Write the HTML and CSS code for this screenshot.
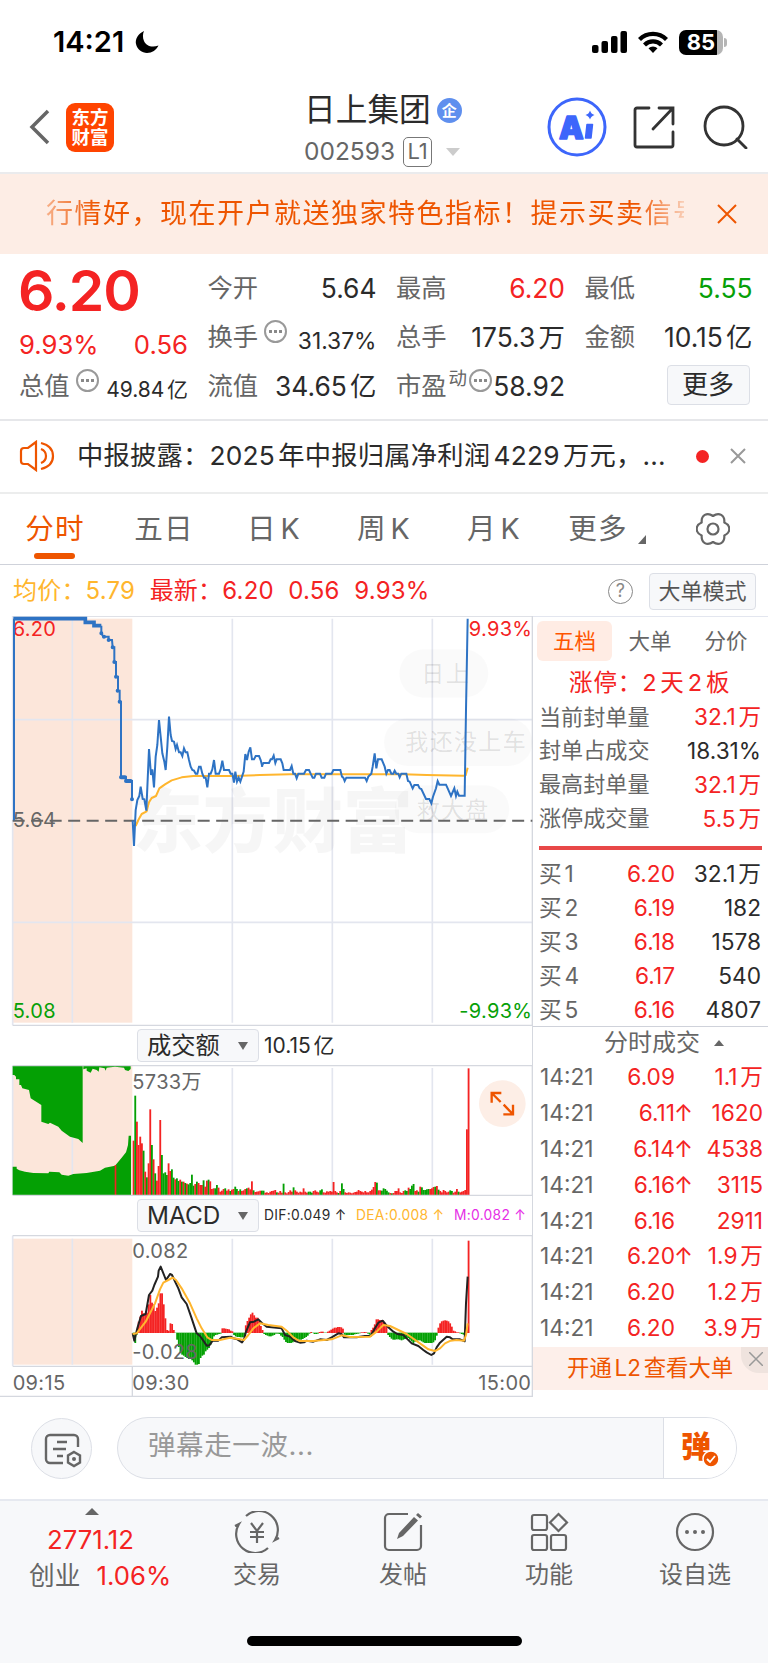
FILE: index.html
```html
<!DOCTYPE html>
<html lang="zh-CN">
<head>
  <meta charset="UTF-8" />
  <meta name="viewport" content="width=device-width, initial-scale=1" />
  <title>日上集团 002593</title>
  <link rel="stylesheet" href="styles.css">
</head>
<body>
  <div class="status">
    <span class="clock">14:21</span>
    <svg class="moon" width="24" height="24" viewBox="0 0 24 24"><path d="M9 1C3 4 0 9 1 14c1.200 5.500 6 9 11 9 5 0 9.500-3 11.500-7.500C17 18 11 16 9 11 7.500 7.500 7.700 4 9 1z"/></svg>
    <svg class="signal" width="35" height="22" viewBox="0 0 35 22"><rect x="0" y="14" width="6.500" height="8" rx="2"/><rect x="9.500" y="10" width="6.500" height="12" rx="2"/><rect x="19" y="5" width="6.500" height="17" rx="2"/><rect x="28.500" y="0" width="6.500" height="22" rx="2"/></svg>
    <svg class="wifi" width="30" height="22" viewBox="0 0 30 22" fill="none" stroke="#000" stroke-width="4.200"><path d="M1.500 8.500a19 19 0 0 1 27 0"/><path d="M6.500 14a12 12 0 0 1 17 0"/><path d="M10.500 17.300a6.500 6.500 0 0 1 9 0L15 22z" fill="#000" stroke="none"/></svg>
    <span class="battery"><b>85</b></span>
  </div>

  <header class="nav">
    <svg class="back" width="22" height="36" viewBox="0 0 22 36"><path d="M19 2L3 18l16 16"/></svg>
    <div class="logo">东方<br>财富</div>
    <div class="title">
      <div class="name">日上集团<span class="ent">企</span></div>
      <div class="code">002593<span class="l1">L1</span><i class="tri-down"></i></div>
    </div>
    <svg class="ai" width="60" height="60" viewBox="0 0 60 60"><circle cx="30" cy="30" r="28"/><text x="12" y="41.500">A</text><path class="stem" d="M40 27.500h5.500l-1.500 13.500h-5.500z"/><path d="M43 13.500q1 3.500 4.500 4.500-3.500 1-4.500 4.500-1-3.500-4.500-4.500 3.500-1 4.500-4.500z"/></svg>
    <svg class="share" width="44" height="44" viewBox="0 0 44 44"><path d="M17 3H5a2 2 0 0 0-2 2v35a2 2 0 0 0 2 2h34a2 2 0 0 0 2-2V27M27 3h14v16M41 3L21 24"/></svg>
    <svg class="search" width="46" height="44" viewBox="0 0 46 44"><circle cx="21" cy="21" r="19"/><path d="M34 34l9 9"/></svg>
  </header>

  <div class="promo">
    <div class="marquee">行情好，现在开户就送独家特色指标！提示买卖信号</div>
    <svg width="20" height="20" viewBox="0 0 20 20"><path d="M1 1l18 18M19 1L1 19"/></svg>
  </div>

  <section class="quote">
    <div class="col">
      <div class="big">6.20</div>
      <div class="chg red"><span>9.93%</span><span>0.56</span></div>
      <div class="kv"><label>总值</label><i class="dots"></i><b class="sm">49.84亿</b></div>
    </div>
    <div class="col">
      <div class="kv"><label>今开</label><b>5.64</b></div>
      <div class="kv"><label>换手</label><i class="dots"></i><b class="sm pct">31.37%</b></div>
      <div class="kv"><label>流值</label><b>34.65亿</b></div>
    </div>
    <div class="col">
      <div class="kv"><label>最高</label><b class="red">6.20</b></div>
      <div class="kv"><label>总手</label><b>175.3万</b></div>
      <div class="kv"><label>市盈</label><sup>动</sup><i class="dots pe"></i><b>58.92</b></div>
    </div>
    <div class="col">
      <div class="kv"><label>最低</label><b class="green">5.55</b></div>
      <div class="kv"><label>金额</label><b>10.15亿</b></div>
      <div class="kv"><button class="more">更多</button></div>
    </div>
  </section>

  <div class="news">
    <svg class="horn" width="36" height="32" viewBox="0 0 36 32"><path d="M17 2L9 8H5a3 3 0 0 0-3 3v10a3 3 0 0 0 3 3h4l8 6zM22 9q5 2 5 7t-5 7M22 3q12 3 12 13T22 29"/></svg>
    <span class="headline">中报披露：2025年中报归属净利润4229万元，...</span>
    <i class="dot"></i>
    <svg class="x" width="16" height="16" viewBox="0 0 16 16"><path d="M1 1l14 14M15 1L1 15"/></svg>
  </div>

  <nav class="tabs">
    <span class="on">分时</span><span>五日</span><span>日K</span><span>周K</span><span>月K</span><span class="mr">更多<i></i></span>
    <svg width="34" height="34" viewBox="0 0 34 34"><path d="M28.300 10.500C35 13.500 35 20.500 28.300 23.500 29 30.800 23 34.300 17 30 11 34.300 5 30.800 5.700 23.500-1 20.500-1 13.500 5.700 10.500 5 3.200 11-.3 17 4 23-.3 29 3.200 28.300 10.500z"/><circle cx="17" cy="17" r="5.500"/></svg>
  </nav>

  <div class="stats">
    <span class="avg">均价：5.79</span>
    <span class="last">最新：6.20</span>
    <span>0.56</span>
    <span>9.93%</span>
    <i class="help">?</i>
    <button>大单模式</button>
  </div>

  <main class="board">
    <div class="charts">
      <!-- chart coordinates are @3x -->
      <svg class="price" width="533" height="410" viewBox="0 48 1599 1230">
        <rect class="pre" x="38" y="56" width="359" height="1212"/>
        <path class="grid" d="M38 48V1276M217 56V1268M697 56V1268M997 56V1268M1297 56V1268M38 359H1597M38 967H1597"/>
        <path class="edge" d="M38 48.500H1597V1278M38 1276H1597"/>
        <text class="mark" x="398" y="742">东方财富</text>
        <g class="bubble">
          <rect x="1198" y="148" width="267" height="145" rx="72"/><text x="1264" y="247">日上</text>
          <rect x="1152" y="355" width="445" height="143" rx="71"/><text x="1216" y="450">我还没上车</text>
          <rect x="1184" y="556" width="344" height="144" rx="72"/><text x="1250" y="655">救大盘</text>
        </g>
        <path class="mid" d="M38 662H1597"/>
        <g class="lbl">
          <text class="r" x="38" y="108">6.20</text>
          <text class="r" x="1597" y="108" text-anchor="end">9.93%</text>
          <text x="38" y="682">5.64</text>
          <text class="g" x="38" y="1253">5.08</text>
          <text class="g" x="1597" y="1253" text-anchor="end">-9.93%</text>
        </g>
        <path class="avgline" d="M407 678L415 660 425 642 440 634 447 607 455 594 468 588 478 565 495 553 515 541 545 532 580 528 700 528 780 525 870 523 1000 523 1210 523 1280 525 1390 527 1397 526 1403 503"/>
        <path class="line thick" d="M40 56H256V67H282V77H304"/>
        <path class="line" d="M42 661V56M304 77V100L310 110H326V120H336L338 142H343V186H348V230H354V272H359V305H363V532H378V543H396V598"/>
        <path class="pts" d="M304 100h0M312 110h0M326 120h0M338 142h0M343 186h0M348 230h0M353 272h0M359 305h0M363 532h12M378 543h14M396 598h0"/>
        <path class="line" d="M398 661L402 738 407 630 412 600 418 588 422 560 428 597 433 598 439 632 447 447 453 525 457 508 462 562 467 470 472 435 477 360 482 410 487 460 493 485 497 510 502 440 507 350 512 405 516 423 522 425 527 447 531 435 537 457 542 457 547 468 552 445 557 457 562 457 567 480 572 500 577 510 582 512 587 521 592 521 597 500 602 500 607 521 612 533 617 533 622 562 627 521 632 521 637 508 642 480 647 521 657 521 662 508 667 482 672 510 687 510 692 521 697 521 702 548 706 515 711 545 716 533 721 545 726 530 731 515 736 462 741 480 746 455 751 442 756 478 762 478 767 468 777 468 782 480 787 500"/>
        <path class="line" transform="translate(780)" d="M5 500L10 489 27 489 32 478 36 478 41 467 46 489 50 478 62 478 67 490 71 510 90 510 95 498 100 521 105 521 110 535 115 521 132 521 138 510 147 510 152 521 158 533 163 533 168 521 180 521 185 533 193 533 198 521 215 521 220 510 241 510 246 530 250 533 254 543 259 533 315 533 320 543 325 530 334 521 338 500 344 460 349 505 354 478 365 478 374 500 379 521 384 510 389 510 394 521 400 521 404 512 409 521 415 521 419 532 424 521 439 521 444 543 449 545 458 565 463 555 474 555 479 565 484 567 498 597 508 597 514 610 519 590 528 565 533 543 538 554 558 554 563 565 573 588 583 565 588 588 592 575 597 587 614 587 618 330 623 56"/>
      </svg>

      <div class="pick">
        <button>成交额<i></i></button><span class="amt">10.15亿</span>
      </div>

      <svg class="vol" width="533" height="131" viewBox="0 135 1599 393">
        <rect class="pre" x="38" y="138" width="359" height="388"/>
        <path class="grid" d="M38 137V526M217 144V526M697 144V526M997 144V526M1297 144V526"/>
        <path class="up-fill" d="M38 138V165H43L48 170V178H58V195H63L67 205 87 210 92 235 105 243 124 255V305L145 312 150 308 175 320 185 332 210 350 235 357 248 369V138z"/>
        <path class="up-fill" d="M250 138V148L260 145V152L272 158 278 146 290 150 296 155 298 142 314 145 317 152 320 143 345 140 372 143 375 150 385 153 392 147V138z"/>
        <path class="up-fill" d="M38 525V440H50V446L58 451 75 455 100 459 145 460 148 455 178 457 185 464 205 467 220 462 260 459 300 452 315 443 345 437 355 425 365 413 378 397 380 390 384 375 386 347H393V525z"/>
        <rect class="down-fill" x="344" y="435" width="5" height="90"/>
        <g id="vol"></g>
        <path class="edge" d="M38 137H1597M38 526.500H1597M1597 135V528"/>
        <text class="lbl" x="397" y="206">5733万</text>
        <circle cx="1507" cy="251" r="70" class="zoomer"/>
        <path class="arrows" d="M1502 246L1475 219M1475 248V219H1504M1511 254L1539 283M1539 254V283H1510"/>
      </svg>

      <div class="pick p2">
        <button>MACD<i></i></button>
        <span class="dif">DIF:0.049 ↑</span><span class="dea">DEA:0.008 ↑</span><span class="m">M:0.082 ↑</span>
      </div>

      <svg class="macd" width="533" height="162" viewBox="0 645 1599 486">
        <rect class="pre" x="38" y="656" width="359" height="378"/>
        <path class="grid" d="M38 647V1038M217 656V1034M697 656V1034M997 656V1034M1297 656V1034"/>
        <path class="edge" d="M38 647H1597M38 1039H1597M1597 645V1131M397 1039V1131M0 1129.500H1599"/>
        <g id="macd"></g>
        <path class="difline" d="M398 940L403 962 412 925 423 888 437 882 447 825 457 812 463 795 474 770 476 752 482 740 488 755 498 780 505 770 510 762 516 765 523 780 535 805 545 832 560 852 575 895 590 940 600 948 612 965 620 977 628 976 638 962 655 962 665 952 692 950 700 955 712 958 726 967 732 958 738 935 750 907 762 905 775 898 785 908 800 920 845 925 855 945 870 950 885 963 900 968 912 967 920 962 940 965 960 958 980 960 995 952 1015 940 1025 942 1032 952 1070 952 1095 948 1112 948 1125 925 1135 908 1148 902 1160 917 1180 935 1192 942 1210 945 1220 955 1235 970 1255 978 1270 990 1280 997 1294 1005 1302 1000 1310 982 1320 968 1340 950 1350 952 1357 957 1380 958 1394 964 1398 850 1403 770"/>
        <path class="avgline" d="M398 942L410 940 437 905 450 880 465 850 480 808 490 788 505 780 518 773 528 780 545 805 570 850 590 895 605 925 622 952 635 960 660 960 690 953 720 958 732 960 745 945 760 925 780 910 805 915 845 920 860 932 880 952 898 963 940 963 995 958 1025 946 1050 951 1110 950 1130 935 1150 915 1170 918 1220 942 1260 970 1285 988 1305 993 1320 985 1335 970 1352 962 1370 960 1392 962 1398 945 1403 910"/>
        <g class="lbl">
          <text x="397" y="715">0.082</text>
          <text x="397" y="1017">-0.028</text>
          <text x="38" y="1110">09:15</text>
          <text x="397" y="1110">09:30</text>
          <text x="1594" y="1110" text-anchor="end">15:00</text>
        </g>
      </svg>
    </div>

    <aside class="depth">
      <div class="seg"><span class="on">五档</span><span>大单</span><span>分价</span></div>
      <div class="limit red">涨停：2天2板</div>
      <dl>
        <dt>当前封单量</dt><dd class="red">32.1万</dd>
        <dt>封单占成交</dt><dd>18.31%</dd>
        <dt>最高封单量</dt><dd class="red">32.1万</dd>
        <dt>涨停成交量</dt><dd class="red">5.5万</dd>
      </dl>
      <div class="bar"></div>
      <div class="bids" id="bids"></div>
      <div class="deal-head">分时成交<i></i></div>
      <div class="deals" id="deals"></div>
      <div class="l2">开通L2查看大单<span><svg width="14" height="14" viewBox="0 0 14 14"><path d="M0 0l14 14M14 0L0 14"/></svg></span></div>
    </aside>
  </main>

  <div class="danmu">
    <div class="round"><svg width="38" height="36" viewBox="0 0 38 36"><path d="M19 31H6a4 4 0 0 1-4-4V7a4 4 0 0 1 4-4h24a4 4 0 0 1 4 4v8M13 10h10M9 17h13M13 24h6M30 20l6 3.500v7L30 34l-6-3.500v-7z"/><circle cx="30" cy="27" r="2"/></svg></div>
    <div class="field">
      <span>弹幕走一波...</span>
      <div class="send">弹<svg width="18" height="18" viewBox="0 0 18 18"><circle cx="9" cy="9" r="8"/><path d="M5 9l3 3 5-6"/></svg></div>
    </div>
  </div>

  <footer class="bottom">
    <div class="index">
      <i></i>
      <div class="red">2771.12</div>
      <div>创业<span class="red">1.06%</span></div>
    </div>
    <div class="item"><svg width="46" height="42" viewBox="0 0 46 42"><path d="M12 5a19 19 0 0 1 29 24l4-2M34 37A19 19 0 0 1 5 13L1 15M17 12l6 8 6-8M23 20v12M16 21h14M16 26h14"/></svg>交易</div>
    <div class="item"><svg width="42" height="42" viewBox="0 0 42 42"><path d="M26 3H7a4 4 0 0 0-4 4v28a4 4 0 0 0 4 4h28a4 4 0 0 0 4-4V14"/><path class="fill" d="M17 22L32 6l4 3.500L21 25l-6 3zM34 4l2-2 4 3.500-2 2z"/></svg>发帖</div>
    <div class="item"><svg width="42" height="42" viewBox="0 0 42 42"><rect x="4" y="4" width="15" height="15" rx="2"/><rect x="4" y="24" width="15" height="15" rx="2"/><rect x="23" y="24" width="15" height="15" rx="2"/><path d="M30.500 3l8.500 8.500-8.500 8.500-8.500-8.500z"/></svg>功能</div>
    <div class="item"><svg width="42" height="42" viewBox="0 0 42 42"><circle cx="21" cy="21" r="18"/><path class="fill" d="M11 21a2 2 0 1 0 4 0 2 2 0 1 0-4 0M19 21a2 2 0 1 0 4 0 2 2 0 1 0-4 0M27 21a2 2 0 1 0 4 0 2 2 0 1 0-4 0"/></svg>设自选</div>
    <div class="home"></div>
  </footer>

  <script src="app.js"></script>
</body>
</html>
```
FILE: styles.css
```css
* {
  box-sizing: border-box;
}
body {
  margin: 0;
  width: 768px;
  background: #fff;
  color: #2b2b2b;
  font-family: Inter, "Noto Sans CJK SC", sans-serif;
  line-height: 1.2;
  text-autospace: normal;
  overflow-x: hidden;
}
i, b {
  font-style: normal;
  font-weight: 400;
}
button {
  font-family: inherit;
  line-height: 1.2;
  padding: 0;
  color: #2b2b2b;
  background: #f7f8fa;
  border: 1.5px solid #dcdfe6;
  border-radius: 4px;
}
svg {
  display: block;
  flex: none;
}
.red { color: #f42323; }
.green { color: #07a007; }

/* status bar */
.status {
  height: 84px;
  display: flex;
  align-items: center;
  padding-left: 53px;
}
.clock {
  font-size: 29px;
  font-weight: 600;
  width: 82px;
  color: #000;
}
.moon { margin-right: 433px; }
.signal { margin-right: 11px; }
.wifi { margin-right: 11px; }
.battery {
  width: 44px;
  height: 25px;
  border-radius: 7px;
  background: linear-gradient(90deg, #000 38px, #b5b5b5 38px);
  position: relative;
}
.battery b {
  display: block;
  color: #fff;
  font-size: 22px;
  font-weight: 700;
  line-height: 25px;
  text-align: center;
}
.battery::after {
  content: "";
  position: absolute;
  left: 45px;
  top: 8px;
  width: 3px;
  height: 9px;
  border-radius: 0 3px 3px 0;
  background: #b5b5b5;
}

/* nav */
.nav {
  height: 90px;
  display: flex;
  align-items: center;
  padding: 0 0 2px 29px;
  border-bottom: 2px solid #eaebed;
}
.back path {
  fill: none;
  stroke: #666;
  stroke-width: 3.5;
}
.logo {
  margin-left: 15px;
  width: 48px;
  height: 49px;
  border-radius: 9px;
  background: #ff4400;
  color: #fff;
  font-size: 18.5px;
  font-weight: 700;
  line-height: 20px;
  padding-top: 4px;
  text-align: center;
}
.title {
  flex: none;
  width: 433px;
  padding: 8px 0 0 190px;
}
.name {
  display: flex;
  align-items: center;
  font-size: 31.7px;
  height: 42px;
}
.ent {
  margin-left: 6px;
  width: 25px;
  height: 25px;
  border-radius: 50%;
  background: #5f8fee;
  color: #fff;
  font-size: 15px;
  font-weight: 700;
  line-height: 25px;
  text-align: center;
}
.code {
  display: flex;
  align-items: center;
  height: 42px;
  font-size: 24.5px;
  color: #666;
}
.l1 {
  margin-left: 8px;
  width: 29px;
  height: 30px;
  border: 1.5px solid #777;
  border-radius: 5px;
  font-size: 22px;
  line-height: 27px;
  text-align: center;
}
.tri-down {
  margin-left: 14px;
  border: 7px solid transparent;
  border-top: 8px solid #ccc;
  border-bottom: 0;
}
.ai circle {
  fill: none;
  stroke: #3d66fb;
  stroke-width: 3;
}
.ai path { fill: #3d66fb; }
.ai text {
  font-size: 31px;
  font-weight: 900;
  fill: #3d66fb;
}
.ai text, .ai .stem {
  stroke: #3d66fb;
  stroke-width: 1.5;
  stroke-linejoin: round;
}
.share { margin-left: 25px; }
.search { margin-left: 27px; }
.share path, .search * {
  fill: none;
  stroke: #333;
  stroke-width: 2.8;
  stroke-linecap: round;
}

.promo {
  height: 80px;
  background: #fdede5;
  display: flex;
  align-items: center;
}
.marquee {
  margin-left: 46px;
  width: 638px;
  margin-right: 33px;
  overflow: hidden;
  white-space: nowrap;
  font-size: 27px;
  line-height: 40px;
  letter-spacing: 1.5px;
  color: #ee5500;
  -webkit-mask-image: linear-gradient(90deg, rgba(0,0,0,.4), #000 50px, #000 590px, transparent 650px);
}
.promo path {
  stroke: #ee5500;
  stroke-width: 2;
}

/* quote */
.quote {
  height: 167px;
  padding: 10px 15px 0 19px;
  display: grid;
  grid-template-columns: 169px 169px 169px 168px;
  column-gap: 19.5px;
  border-bottom: 2px solid #e6e7ea;
}
.big {
  height: 54px;
  font-size: 57px;
  line-height: 54px;
  font-weight: 600;
  color: #f42323;
  letter-spacing: -1px;
  text-indent: -1px;
}
.chg {
  height: 44px;
  display: flex;
  justify-content: space-between;
  align-items: flex-end;
  font-size: 25.7px;
}
.chg span { line-height: 34px; }
.kv {
  height: 49px;
  display: flex;
  align-items: center;
}
.kv label {
  font-size: 25.3px;
  color: #666;
}
.kv b {
  margin-left: auto;
  font-size: 26.4px;
  white-space: nowrap;
}
.kv b.sm {
  font-size: 21px;
  padding-top: 6px;
}
.kv b.pct { font-size: 22.8px; }
.kv sup {
  font-size: 18.5px;
  color: #666;
  margin: -17px 1px 0 2px;
  line-height: 20px;
}
.dots {
  width: 23px;
  height: 23px;
  margin: -12px 0 0 6px;
  border: 2px solid #999;
  border-radius: 50%;
  background: radial-gradient(circle at center, #888 1.4px, transparent 1.9px) 0 0 / 5px 100% content-box no-repeat,
    radial-gradient(circle at center, #888 1.4px, transparent 1.9px) 5px 0 / 5px 100% content-box no-repeat,
    radial-gradient(circle at center, #888 1.4px, transparent 1.9px) 10px 0 / 5px 100% content-box no-repeat;
  padding: 0 2px;
}
.dots.pe { margin-left: 1px; }
.more {
  margin: -3px 3px 0 auto;
  width: 83px;
  height: 40px;
  font-size: 26px;
}

.news {
  height: 73px;
  display: flex;
  align-items: center;
  padding: 0 0 1px 19px;
  border-bottom: 2px solid #eceded;
}
.horn path {
  fill: none;
  stroke: #ee5500;
  stroke-width: 2.2;
}
.headline {
  margin-left: 22px;
  width: 606px;
  white-space: nowrap;
  font-size: 26.3px;
  letter-spacing: .2px;
}
.dot {
  width: 13px;
  height: 13px;
  border-radius: 50%;
  background: #f42323;
  margin: 0 21px 0 13px;
}
.x path {
  stroke: #999;
  stroke-width: 2;
}

/* period tabs */
.tabs {
  height: 71px;
  border-bottom: 1px solid #cfd2da;
  display: flex;
  align-items: center;
  padding-left: 1px;
  font-size: 28.6px;
  color: #666;
}
.tabs span {
  position: relative;
  width: 110px;
  text-align: center;
  letter-spacing: 1.2px;
}
.tabs .on {
  color: #ee5500;
  width: 108px;
}
.tabs .on::after {
  content: "";
  position: absolute;
  left: 33px;
  bottom: -13px;
  width: 41px;
  height: 6px;
  border-radius: 3px;
  background: #ee5500;
}
.tabs .mr { margin-left: -8px; width: 114px; }
.tabs .mr i {
  position: absolute;
  left: 97px;
  bottom: 2px;
  border-left: 8px solid transparent;
  border-bottom: 9px solid #666;
}
.tabs svg { margin-left: 41px; }
.tabs svg * {
  fill: none;
  stroke: #666;
  stroke-width: 2.2;
  stroke-linejoin: round;
}

.stats {
  height: 51px;
  display: flex;
  align-items: center;
  padding: 1px 12px 0 13px;
  font-size: 24px;
  letter-spacing: .2px;
  color: #f42323;
}
.stats span { margin-right: 14.5px; }
.stats .avg { color: #ffb62e; }
.help {
  margin-left: auto;
  width: 25px;
  height: 25px;
  border: 1.5px solid #888;
  border-radius: 50%;
  color: #888;
  font-size: 18px;
  line-height: 22px;
  text-align: center;
}
.stats button {
  margin-left: 16px;
  width: 107px;
  height: 37px;
  font-size: 22px;
  color: #555;
}

/* charts */
.board {
  display: flex;
}
.charts {
  width: 533px;
}
.pre { fill: #fce6da; }
.grid {
  fill: none;
  stroke: #e3e6ef;
  stroke-width: 5;
}
.edge {
  fill: none;
  stroke: #d5d8df;
  stroke-width: 4;
}
.mid {
  stroke: #666;
  stroke-width: 6;
  stroke-dasharray: 36 19.500;
}
.mark {
  font-size: 210px;
  font-weight: 900;
  fill: rgba(0, 0, 0, .035);
}
.bubble rect { fill: rgba(0, 0, 0, .018); }
.bubble text {
  font-size: 69px;
  letter-spacing: 4px;
  fill: rgba(0, 0, 0, .11);
}
.lbl {
  font-size: 60px;
  letter-spacing: 1px;
  fill: #666;
  text-autospace: no-autospace;
}
.lbl .r { fill: #f42323; }
.lbl .g { fill: #07a007; }
.line {
  fill: none;
  stroke: #2e73c4;
  stroke-width: 6;
}
.thick { stroke-width: 11; }
.pts {
  stroke: #2e73c4;
  stroke-width: 12;
  stroke-linecap: round;
}
.avgline, .difline {
  fill: none;
  stroke: #ffb62e;
  stroke-width: 6;
  stroke-linejoin: round;
}
.difline { stroke: #222; }
.up-fill { fill: #04a004; }
.down-fill { fill: #f42323; }
.zoomer { fill: #fdeee6; }
.arrows {
  fill: none;
  stroke: #ee5500;
  stroke-width: 7;
}
.pick {
  height: 39px;
  display: flex;
  align-items: center;
  padding-left: 137px;
  border-right: 1px solid #d5d8df;
}
.pick button {
  width: 122px;
  height: 33px;
  display: flex;
  align-items: center;
  font-size: 24.3px;
  padding-left: 9px;
}
.pick button i {
  margin-left: auto;
  margin-right: 10px;
  border: 5px solid transparent;
  border-top: 8px solid #666;
  border-bottom: 0;
}
.amt {
  margin-left: 5px;
  font-size: 21px;
}
.p2 span {
  font-size: 13.8px;
  letter-spacing: .3px;
  margin-left: 5px;
  white-space: nowrap;
}
.p2 .dif { width: 87px; }
.p2 .dea { width: 93px; color: #ffb62e; }
.p2 .m { color: #e62ee6; }

/* order book */
.depth {
  width: 235px;
  border-top: 1px solid #e3e6ef;
}
.seg {
  display: flex;
  height: 44px;
  padding: 4px 0 0 4px;
  font-size: 21.5px;
  color: #666;
}
.seg span {
  width: 76px;
  height: 40px;
  line-height: 40px;
  text-align: center;
}
.seg .on {
  width: 75px;
  border-radius: 6px;
  background: #ffece4;
  color: #ff5500;
}
.limit {
  height: 39px;
  line-height: 44px;
  font-size: 23.5px;
  letter-spacing: .9px;
  padding-left: 36px;
}
dl {
  margin: 0;
  padding: 0 7px 0 6px;
  display: grid;
  grid-template-columns: auto auto;
  grid-auto-rows: 33.8px;
  align-items: center;
  font-size: 22.1px;
}
dt { color: #666; }
dd {
  margin: 0;
  text-align: right;
  font-size: 22.6px;
}
.bar {
  margin: 11px 6px 0;
  height: 4px;
  background: #e84848;
}
.bids { margin-top: 7px; }
.bid, .deal {
  display: grid;
  grid-template-columns: 56px 80px 86px;
  height: 33.8px;
  align-items: center;
  padding-left: 6px;
  font-size: 22.7px;
}
.bid > :first-child, .deal > :first-child { color: #666; }
.bid > :nth-child(n+2), .deal > :nth-child(n+2) { text-align: right; }
.deal-head {
  height: 33px;
  border-top: 1px solid #cfd2da;
  display: flex;
  align-items: center;
  padding-left: 71px;
  font-size: 24px;
  color: #666;
}
.deal-head i {
  margin-left: 14px;
  border: 5px solid transparent;
  border-bottom: 6px solid #666;
  border-top: 0;
}
.deal {
  height: 35.8px;
  grid-template-columns: 57px 78px 88px;
  padding-left: 7px;
}
.price-cell { position: relative; }
.price-cell em {
  position: absolute;
  left: 100%;
  top: 0;
  margin-left: -1px;
  font-style: normal;
}
.l2 {
  position: relative;
  height: 43px;
  margin-top: 1px;
  line-height: 41px;
  padding-left: 34px;
  background: #fdefea;
  color: #ee5500;
  font-size: 22.4px;
}
.l2 span {
  position: absolute;
  top: 0;
  right: 0;
  width: 27px;
  height: 26px;
  border-bottom-left-radius: 18px;
  background: #efe3de;
  padding: 5px 0 0 8px;
}
.l2 path {
  stroke: #999;
  stroke-width: 1.5;
}

/* comment bar */
.danmu {
  height: 102px;
  display: flex;
  align-items: center;
  padding-left: 31px;
}
.round {
  width: 61px;
  height: 61px;
  border: 1px solid #dcdfe6;
  border-radius: 50%;
  background: #f7f8fa;
  padding: 13px 0 0 12px;
}
.round path {
  fill: none;
  stroke: #666;
  stroke-width: 2.4;
}
.round circle { fill: #666; }
.field {
  margin-left: 25px;
  width: 620px;
  height: 62px;
  border: 1px solid #dcdfe6;
  border-radius: 31px;
  background: #f7f8fa;
  display: flex;
  overflow: hidden;
  font-size: 27.5px;
  color: #999;
  text-autospace: no-autospace;
}
.field span {
  width: 546px;
  padding-left: 30px;
  line-height: 55px;
  letter-spacing: .6px;
}
.send {
  position: relative;
  width: 73px;
  border-left: 1px solid #dcdfe6;
  background: #fff;
  padding-left: 17px;
  color: #ee5500;
  font-size: 30px;
  font-weight: 900;
  line-height: 57px;
}
.send svg {
  position: absolute;
  left: 38px;
  top: 32px;
}
.send circle { fill: #ee5500; stroke: #fff; stroke-width: 1.5; }
.send path { fill: none; stroke: #fff; stroke-width: 1.8; }

/* bottom bar */
.bottom {
  position: relative;
  height: 164px;
  border-top: 2px solid #e6e9f0;
  background: #f7f8fa;
  display: flex;
  color: #666;
}
.index {
  width: 184px;
  padding: 7px 0 0 29px;
  font-size: 25.7px;
  line-height: 36px;
}
.index i {
  display: block;
  width: 0;
  margin: 0 0 7px 56px;
  border: 7px solid transparent;
  border-bottom: 7px solid #666;
  border-top: 0;
}
.index div.red { padding-left: 18px; }
.index span.red { padding-left: 13px; }
.item {
  width: 146px;
  padding-top: 10px;
  text-align: center;
  font-size: 24px;
  line-height: 43px;
}
.item svg { margin: 0 auto; }
.item svg * {
  fill: none;
  stroke: #666;
  stroke-width: 2.2;
}
.item svg .fill { fill: #666; stroke: none; }
.home {
  position: absolute;
  left: 247px;
  bottom: 17px;
  width: 275px;
  height: 10px;
  border-radius: 5px;
  background: #000;
}
```
FILE: app.js
```js
const volume = 'r163 g298 r220 r150 r175 r155 g133 r70 g53 r95 r257 g150 r107 g65 r43 r87 r225 g120 g65 g68 g60 r95 r72 g77 g52 r47 g50 g42 r46 g40 r40 g36 r34 g32 g36 g61 g28 r33 g40 r36 r30 r30 g44 r25 r43 g46 r41 r18 r20 g20 g30 r22 r10 r13 r18 g20 r13 r17 g12 r16 r18 g25 g18 r12 g17 r12 r14 r18 g20 r22 r17 r41 g14 r9 r10 r11 r13 g13 ' +
  'g13 r7 r8 r6 r10 r12 r13 r15 g8 r7 r12 r7 g34 r8 r5 r9 r14 r10 g23 r14 r10 r7 r10 r8 r20 r10 r7 g10 g10 g7 r12 r14 r10 r8 g14 g17 r8 r7 r11 r10 r12 r10 r39 r12 r8 g6 r12 g35 g18 r8 r6 r8 r7 r5 r7 r9 r10 r15 r12 r10 r8 r12 r8 r8 r12 r16 r24 r39 g37 r14 r14 g13 g20 g18 g13 g8 r6 g5 r6 r12 r12 r20 r8 r6 r12 g14 g12 r22 g18 g28 g33 r12 r14 g10 r25 g23 g15 g15 g17 g18 r18 r20 r24 g25 r27 g16 r12 r8 r15 r12 r8 r10 g14 g12 r7 r10 r18 g10 r8 r10 r12 r15 r197 r380';

const macd = [-10, -30, -5, 33, 48, 66, 58, 53, 60, 85, 113, 90, 85, 65, 75, 88, 118, 118, 85, 43, 8, 6, 28, 26, 8, 0,
  -20, -42, -60, -65, -68, -72, -75, -78, -78, -82, -88, -95, -95, -93, -75, -68, -65, -55, -50, -45, -35, -25, -10, -6, -5, -3, -2,
  13, 13, 12, 11, 10, 6, 4, -6, -10, -12, -12, -13, -13, -12, 22, 35, 45, 55, 60, 52, 45, 45, 35, 20, 8,
  -3, -6, -8, -10, -10, -8, -6, -2, -2, -3, -8, -12, -20, -27, -30, -30, -30, -28, -25, -22, -20, -20, -20, -18, -15, -12, -8, -2,
  2, 0, -3, -3, -2, 2, 3, 3, 0, 0, 3, 6, 9, 12, 15, 15, 17, 17, 16, 12, -5, -6, -6, -6, -6, -6, -4, -3, -2, -1, 1, 1, 2, 1, -2, -5,
  8, 15, 25, 40, 40, 38, 38, 36, 30, 22, -6, -12, -17, -20, -20, -19, -19, -20, -22, -20, -18, -15, -15, -20, -25, -30, -26, -24, -22, -22,
  -25, -28, -30, -30, -30, -30, -30, -28, -22, -8, 15, 28, 34, 36, 37, 36, 34, 28, 18, 6, 4, 1, 1, -1, -3, -5, -3, 10, 276];

const bids = [['买1', '6.20', '32.1万'], ['买2', '6.19', '182'], ['买3', '6.18', '1578'], ['买4', '6.17', '540'], ['买5', '6.16', '4807']];
const deals = [['6.09', '', '1.1万'], ['6.11', '↑', '1620'], ['6.14', '↑', '4538'], ['6.16', '↑', '3115'],
  ['6.16', '', '2911'], ['6.20', '↑', '1.9万'], ['6.20', '', '1.2万'], ['6.20', '', '3.9万']];

function bar(x, y, h, up) {
  return `<rect class="${up ? 'down-fill' : 'up-fill'}" x="${x}" y="${y}" width="5.5" height="${h}"/>`;
}

// one bar per minute, 5 units wide
const vs = volume.split(' ');
document.getElementById('vol').innerHTML = vs.map((v, i) => {
  const h = +v.slice(1);
  return bar(398 + i * 1005 / (vs.length - 1), 525 - h, h, v[0] === 'r');
}).join('');

document.getElementById('macd').innerHTML = macd.map((v, i) =>
  bar(398 + i * 1005 / (macd.length - 1), v > 0 ? 938 - v : 938, Math.abs(v) + 1, v > 0)).join('');

document.getElementById('bids').innerHTML = bids.map(b =>
  `<div class="bid"><span>${b[0]}</span><span class="red">${b[1]}</span><span>${b[2]}</span></div>`).join('');

document.getElementById('deals').innerHTML = deals.map(d =>
  `<div class="deal"><span>14:21</span><span class="red price-cell">${d[0]}<em>${d[1]}</em></span><span class="red">${d[2]}</span></div>`).join('');
```
